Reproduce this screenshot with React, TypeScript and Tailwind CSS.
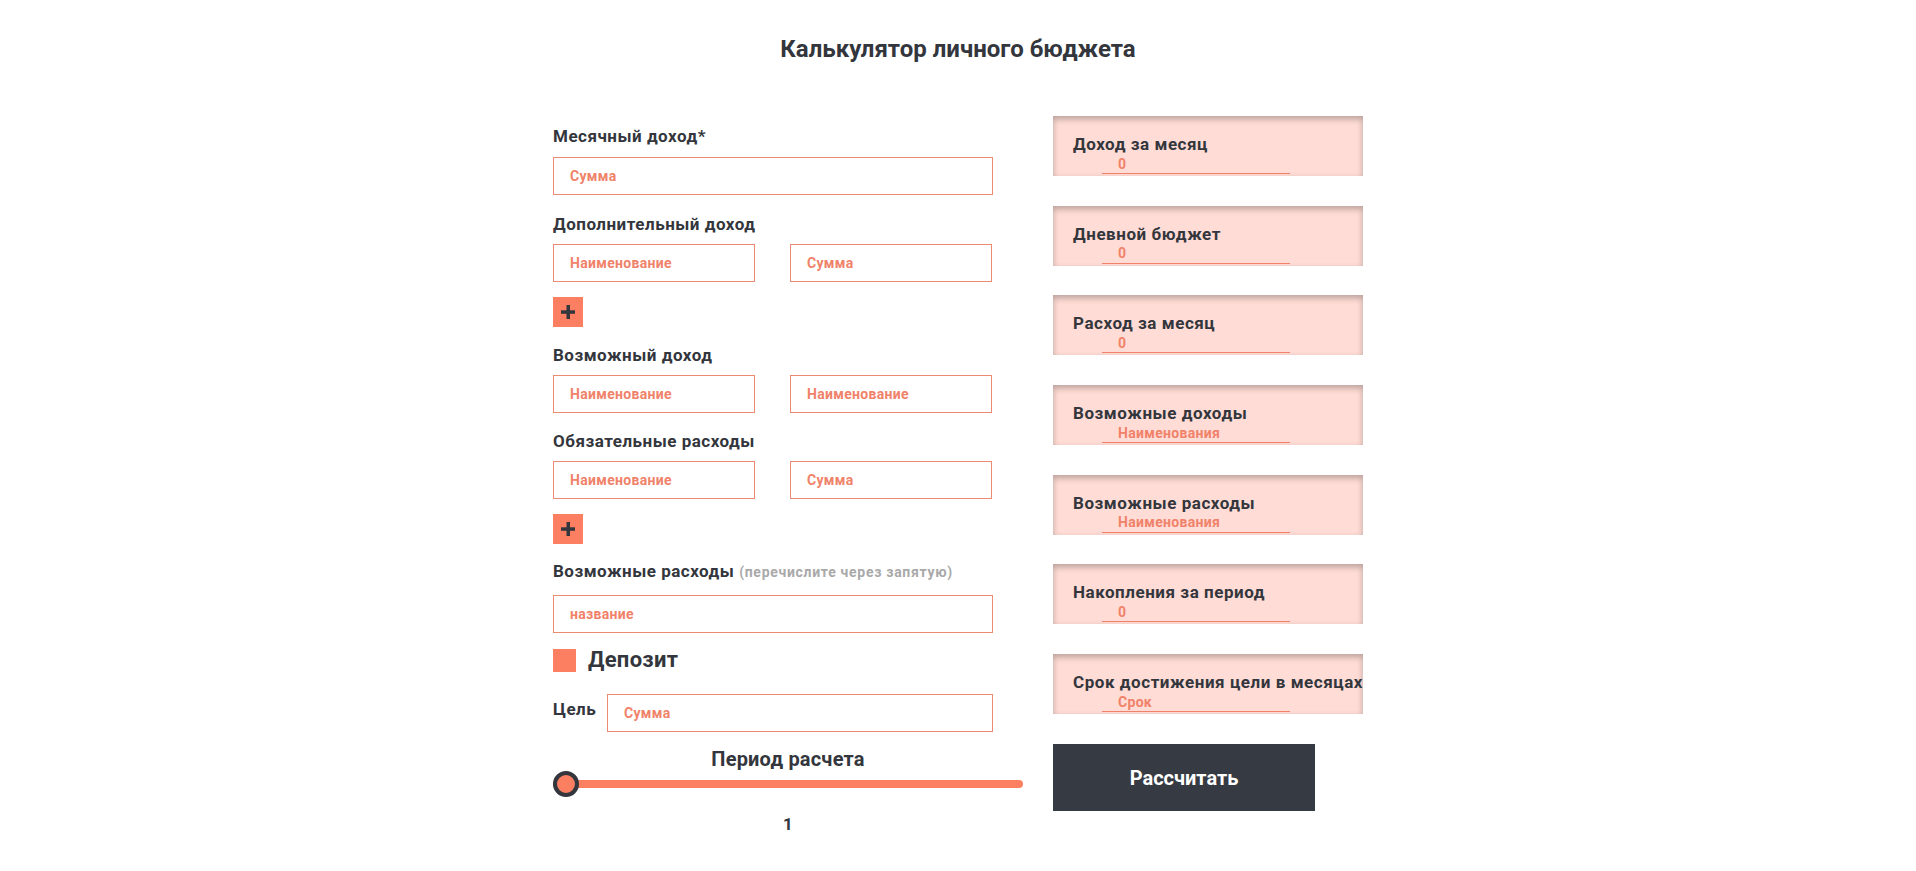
import { useState } from "react";

const inputCls =
    "border border-[#ec8a72] h-[38px] px-[16px] text-[14px] tracking-[0.3px] font-bold text-[#f0826a] placeholder:text-[#f0826a] outline-none bg-white";

function Label({ children, className = "" }: { children: React.ReactNode; className?: string }) {
    return <div className={`text-[17px] leading-[20px] tracking-[0.5px] font-bold text-[#33363c] ${className}`}>{children}</div>;
}

function PlusButton({ className = "" }: { className?: string }) {
    return (
        <button className={`w-[30px] h-[30px] bg-[#fd7f61] flex items-center justify-center ${className}`}>
            <svg width="14" height="14" viewBox="0 0 14 14">
                <rect x="5.5" y="0" width="3.5" height="14" fill="#33363c" />
                <rect x="0" y="5.3" width="14" height="3.5" fill="#33363c" />
            </svg>
        </button>
    );
}

function ResultCard({ title, value }: { title: string; value: string }) {
    return (
        <div className="h-[60px] bg-[#ffdcd5] overflow-hidden pl-[20px] pt-[18px] shadow-[inset_0_3px_6px_rgba(0,0,0,0.28)]">
            <div className="text-[17px] leading-[20px] tracking-[0.55px] font-bold text-[#33363c] whitespace-nowrap">{title}</div>
            <input
                readOnly
                placeholder={value}
                className="block ml-[29px] w-[188px] h-[20px] bg-transparent border-b border-[#f0826a] pl-[16px] text-[14px] leading-[18px] tracking-[0.3px] font-bold placeholder:text-[#f0826a] outline-none"
            />
        </div>
    );
}

export default function App() {
    const [deposit, setDeposit] = useState(false);
    const [period] = useState(1);

    return (
        <div className="min-h-screen bg-white font-['Roboto','Liberation_Sans',sans-serif] text-[#33363c]">
            <h1 className="pt-[34px] text-center text-[24px] leading-[30px] font-bold">Калькулятор личного бюджета</h1>

            <div className="w-[810px] mx-auto mt-[52px] flex gap-[30px]">
                {/* form */}
                <div className="w-[470px] pt-[10px]">
                    <div className="w-[440px]">
                        <Label>Месячный доход*</Label>
                        <input className={`${inputCls} w-full mt-[11px] h-[37px]`} placeholder="Сумма" />

                        <Label className="mt-[19px]">Дополнительный доход</Label>
                        <div className="flex gap-[35px] mt-[10px]">
                            <input className={`${inputCls} w-[202px]`} placeholder="Наименование" />
                            <input className={`${inputCls} w-[202px]`} placeholder="Сумма" />
                        </div>
                        <PlusButton className="mt-[15px]" />

                        <Label className="mt-[18px]">Возможный доход</Label>
                        <div className="flex gap-[35px] mt-[10px]">
                            <input className={`${inputCls} w-[202px]`} placeholder="Наименование" />
                            <input className={`${inputCls} w-[202px]`} placeholder="Наименование" />
                        </div>

                        <Label className="mt-[18px]">Обязательные расходы</Label>
                        <div className="flex gap-[35px] mt-[10px]">
                            <input className={`${inputCls} w-[202px]`} placeholder="Наименование" />
                            <input className={`${inputCls} w-[202px]`} placeholder="Сумма" />
                        </div>
                        <PlusButton className="mt-[15px]" />

                        <Label className="mt-[17px]">
                            Возможные расходы{" "}
                            <span className="text-[14px] tracking-[0.7px] text-[#a9a9a9]">(перечислите через запятую)</span>
                        </Label>
                        <input className={`${inputCls} w-full mt-[13px]`} placeholder="название" />

                        <label className="flex items-center gap-[12px] mt-[15px] cursor-pointer">
                            <span
                                onClick={() => setDeposit(!deposit)}
                                className="w-[23px] h-[23px] bg-[#fd7f61]"
                            />
                            <span className="text-[22px] leading-[24px] tracking-[0.3px] font-bold">Депозит</span>
                        </label>

                        <div className="flex items-start mt-[22px]">
                            <Label className="mt-[5px]">Цель</Label>
                            <input className={`${inputCls} w-[386px] ml-auto`} placeholder="Сумма" />
                        </div>
                    </div>

                    <div className="mt-[15px] text-center text-[20px] leading-[24px] tracking-[0.2px] font-bold">Период расчета</div>
                    <div className="relative h-[26px] flex items-center">
                        <div className="w-full h-[8px] rounded-full bg-[#fd7f61]" />
                        <div className="absolute left-0 top-0 w-[26px] h-[26px] rounded-full bg-[#fd7f61] border-[4px] border-[#33363c]" />
                    </div>
                    <div className="mt-[17px] text-center text-[17px] leading-[20px] font-bold">{period}</div>
                </div>

                {/* results */}
                <div className="w-[310px] flex flex-col">
                    <div className="flex flex-col gap-[29.7px]">
                        <ResultCard title="Доход за месяц" value="0" />
                        <ResultCard title="Дневной бюджет" value="0" />
                        <ResultCard title="Расход за месяц" value="0" />
                        <ResultCard title="Возможные доходы" value="Наименования" />
                        <ResultCard title="Возможные расходы" value="Наименования" />
                        <ResultCard title="Накопления за период" value="0" />
                        <ResultCard title="Срок достижения цели в месяцах" value="Срок" />
                    </div>
                    <button className="mt-[30px] w-[262px] h-[67px] bg-[#363a42] text-white text-[20px] font-bold">
                        Рассчитать
                    </button>
                </div>
            </div>
        </div>
    );
}
